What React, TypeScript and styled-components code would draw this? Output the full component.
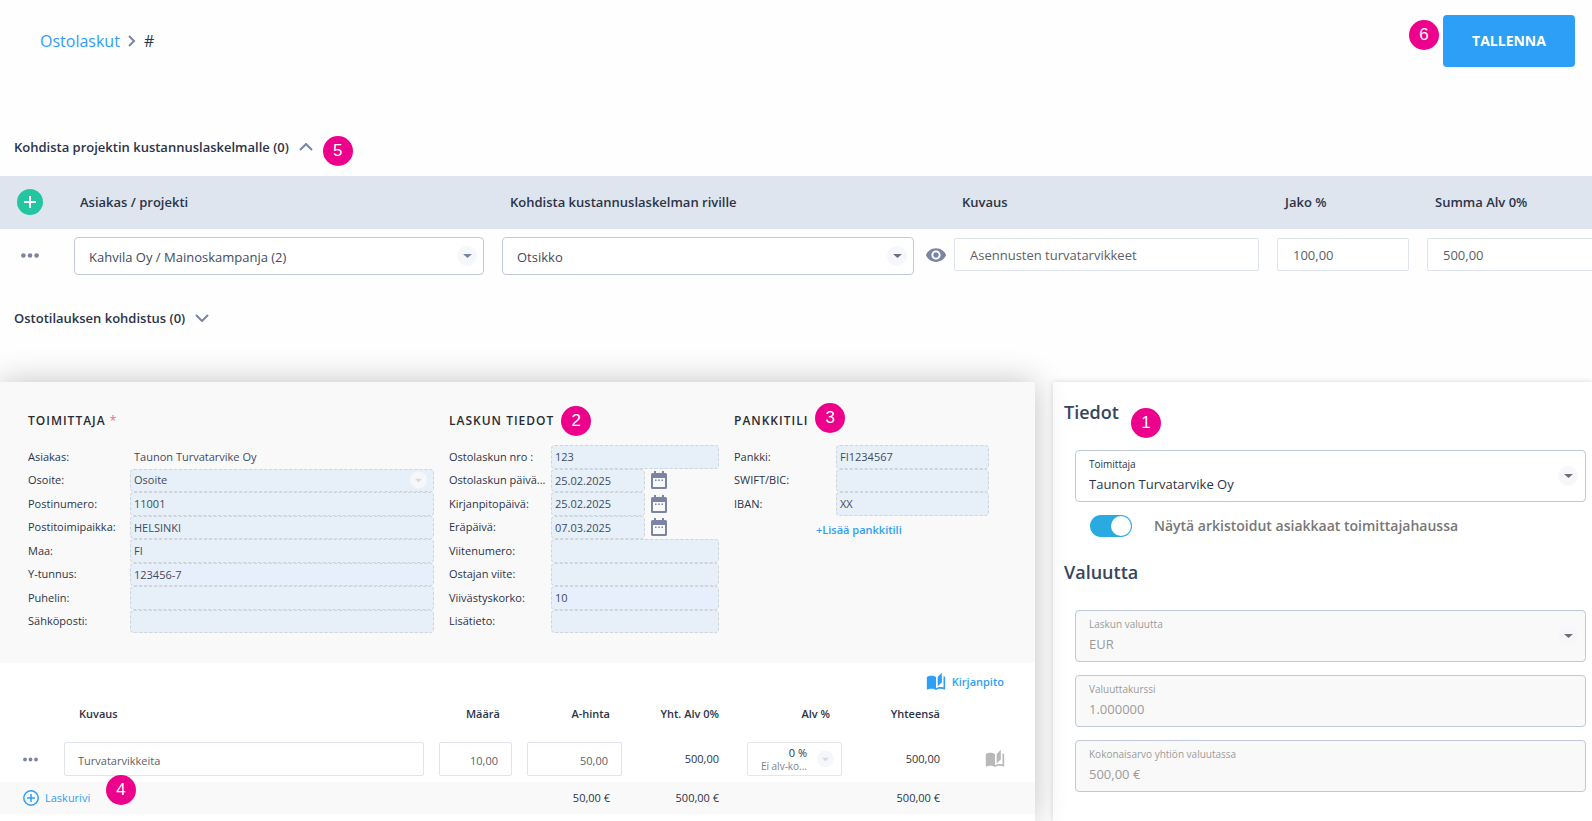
import React from 'react';
import styled, { createGlobalStyle, css } from 'styled-components';
import { MdAutoStories, MdVisibility } from 'react-icons/md';

const GlobalStyle = createGlobalStyle`
  *, *::before, *::after { box-sizing: border-box; }
  body {
    margin: 0;
    background: #fefefe;
    color: #2b3448;
    font-family: 'Open Sans', 'Noto Sans', sans-serif;
    font-size: 13px;
    line-height: 20px;
  }
  input, select, button { font: inherit; color: inherit; margin: 0; }
  h1, h2, h3 { margin: 0; }
`;

const Page = styled.main`
  display: flex;
  flex-direction: column;
  min-height: 100vh;
  overflow-x: clip;
`;

/* ---------- shared parts ---------- */

const Anchor = styled.div`
  position: relative;
  display: inline-flex;
  align-items: center;
`;

const Badge = styled.span<{ $top: number; $gap: number; $before?: boolean }>`
  position: absolute;
  z-index: 3;
  top: ${(p) => p.$top}px;
  ${(p) => (p.$before ? 'right' : 'left')}: 100%;
  margin: 0 ${(p) => p.$gap}px;
  width: 30px;
  height: 30px;
  border-radius: 50%;
  background: #ec008c;
  color: #fff;
  font: 400 17px/29px 'Liberation Sans', Arial, sans-serif;
  letter-spacing: 0;
  text-align: center;
`;

const CaretBubble = styled.span<{ $size: number; $right: number; $tone?: string }>`
  position: absolute;
  top: 50%;
  right: ${(p) => p.$right}px;
  width: ${(p) => p.$size}px;
  height: ${(p) => p.$size}px;
  transform: translateY(-50%);
  display: grid;
  place-items: center;
  border-radius: 50%;
  background: #f6f7fb;
  color: ${(p) => p.$tone ?? '#6b7080'};
  pointer-events: none;
`;

function Caret(props: { size?: number; right?: number; tone?: string; width?: number }) {
  const { size = 20, right = 7, tone, width = 9 } = props;
  return (
    <CaretBubble $size={size} $right={right} $tone={tone}>
      <svg width={width} height="4" viewBox="0 0 10 5" preserveAspectRatio="none" aria-hidden="true">
        <path d="M0 0h10L5 5z" fill="currentColor" />
      </svg>
    </CaretBubble>
  );
}

function Chevron({ dir }: { dir: 'right' | 'up' | 'down' }) {
  const shapes = {
    right: { w: 8, h: 12, d: 'M1 1l5 5-5 5' },
    up: { w: 14, h: 8, d: 'M1 7l6-6 6 6' },
    down: { w: 14, h: 8, d: 'M1 1l6 6 6-6' },
  };
  const s = shapes[dir];
  return (
    <svg width={s.w} height={s.h} viewBox={`0 0 ${s.w} ${s.h}`} aria-hidden="true">
      <path d={s.d} fill="none" stroke="#7c84a3" strokeWidth="2" />
    </svg>
  );
}

const IconButton = styled.button`
  display: inline-flex;
  align-items: center;
  justify-content: center;
  padding: 0;
  border: 0;
  background: none;
  color: #7c84a3;
  cursor: pointer;
`;

function Dots({ width }: { width: number }) {
  return (
    <svg width={width} height="5" viewBox="0 0 18 5" aria-hidden="true">
      <circle cx="2.4" cy="2.5" r="2.3" fill="currentColor" />
      <circle cx="9" cy="2.5" r="2.3" fill="currentColor" />
      <circle cx="15.6" cy="2.5" r="2.3" fill="currentColor" />
    </svg>
  );
}

/* ---------- top bar ---------- */

const TopBar = styled.header`
  display: flex;
  align-items: center;
  justify-content: space-between;
  padding: 15px 17px 0 40px;
`;

const Breadcrumb = styled.nav`
  display: flex;
  align-items: center;
  gap: 8px;
  font-size: 16px;
  font-weight: 500;
  a { color: #2e9ff7; text-decoration: none; }
`;

const SaveButton = styled.button`
  width: 132px;
  height: 52px;
  border: 0;
  border-radius: 4px;
  background: #2e9ff7;
  color: #fff;
  font-size: 14px;
  font-weight: 700;
  cursor: pointer;
`;

/* ---------- allocation ---------- */

const SectionToggle = styled.button`
  display: inline-flex;
  align-items: center;
  gap: 10px;
  height: 22px;
  padding: 0;
  border: 0;
  background: none;
  font-weight: 600;
  cursor: pointer;
`;

const Section = styled.section<{ $above: number; $below: number }>`
  display: flex;
  margin: ${(p) => p.$above}px 0 ${(p) => p.$below}px;
  padding-left: 14px;
`;

const AllocationTable = styled.table`
  display: block;
  width: calc(100% + 16px);
  thead, tbody { display: block; }
  tr {
    display: grid;
    grid-template-columns: 74px minmax(0, 428fr) minmax(0, 452fr) minmax(0, 323fr) minmax(0, 150fr) minmax(0, 181fr);
  }
  thead tr { align-items: center; height: 53px; padding-bottom: 2px; background: #dee5ef; }
  th { padding: 0 0 0 8px; text-align: left; font-weight: 600; }
  th:nth-child(2) { padding-left: 6px; }
  th:first-child { display: flex; padding-left: 17px; }
  td { padding: 9px 18px 8px 0; }
  td:first-child { padding: 14px 0 0 21px; }
  td:last-child { padding-right: 0; }
`;

const SelectCell = styled.td`
  && { display: flex; align-items: start; gap: 11px; padding: 8px 18px 8px 0; }
  &&:nth-child(3) { padding-right: 7px; }
  ${IconButton} { height: 36px; }
`;

const AddButton = styled(IconButton)`
  width: 26px;
  height: 26px;
  border-radius: 50%;
  background: #23c6a1;
  color: #fff;
`;

const SelectBox = styled.div`
  position: relative;
  flex: 1;
  min-width: 0;
  select {
    appearance: none;
    width: 100%;
    height: 38px;
    padding: 2px 32px 0 14px;
    border: 1px solid #c1c8da;
    border-radius: 4px;
    background: #fff;
    color: #414b5e;
  }
`;

const PlainInput = styled.input<{ $small?: boolean }>`
  display: block;
  width: 100%;
  border: 1px solid #e0e4ec;
  border-radius: 2px;
  background: #fff;
  color: #5b5f68;
  ${(p) =>
    p.$small
      ? css`
          height: 34px;
          padding: 2px 13px 0;
          font-size: 11px;
        `
      : css`
          height: 33px;
          padding: 0 15px;
        `}
`;

/* ---------- panels ---------- */

const Panels = styled.div`
  display: grid;
  grid-template-columns: minmax(0, 1035fr) minmax(0, 539fr);
  gap: 18px;
  flex: 1;
`;

const InvoicePanel = styled.section`
  position: relative;
  z-index: 1;
  background: #fff;
  box-shadow: 0 0 30px rgba(0, 0, 0, 0.24);
  font-size: 11px;
`;

const SidePanel = styled.aside`
  padding: 18px 6px 0 11px;
  background: #fff;
  box-shadow: 0 0 6px rgba(0, 0, 0, 0.16);
`;

const DetailGrid = styled.div`
  display: grid;
  grid-template-columns: minmax(0, 406fr) minmax(0, 270fr) minmax(0, 255fr);
  gap: 15px;
  padding: 29px 46px 30px 28px;
  background: #f9f9f9;
`;

const DetailTitle = styled.h2`
  font-size: 12px;
  line-height: 20px;
  font-weight: 600;
  letter-spacing: 1px;
  color: #2a2a33;
  i { color: #ec6a92; font-style: normal; font-weight: 400; }
`;

const FieldList = styled.div`
  display: grid;
  grid-template-rows: repeat(8, 1fr);
  height: 188px;
  margin-top: 14px;
`;

const FieldRow = styled.div`
  display: grid;
  grid-template-columns: 102px minmax(0, 1fr);
  align-items: stretch;
  label { align-self: center; white-space: nowrap; }
`;

const FieldSlot = styled.div`
  position: relative;
  display: flex;
  align-items: stretch;
  gap: 6px;
  min-width: 0;
`;

const dashed = css`
  flex: 1;
  min-width: 0;
  height: 100%;
  padding: 0 3px;
  border: 1px dashed #cfd4d8;
  border-radius: 4px;
  color: #414b5e;
`;

const FieldInput = styled.input<{ $kind?: string }>`
  ${dashed}
  background: ${(p) => (p.$kind === 'autofill' ? '#e8effc' : '#e7f0f8')};
  ${(p) => p.$kind === 'bare' && css`background: none; border-color: transparent;`}
  ${(p) => p.$kind === 'date' && css`flex: 0 0 94px;`}
`;

const FieldSelect = styled.select`
  ${dashed}
  appearance: none;
  background: #e7f0f8;
`;

const AddAccount = styled.a`
  justify-self: start;
  align-self: end;
  margin-left: 82px;
  color: #2e9ff7;
  font-weight: 600;
  line-height: 18px;
  text-decoration: none;
`;

function CalendarIcon() {
  return (
    <svg width="16" height="18" viewBox="0 0 16 18" aria-hidden="true">
      <path
        fillRule="evenodd"
        fill="currentColor"
        d="M3 0h2v2h6V0h2v2h1.500a1.500 1.500 0 0 1 1.500 1.500v13a1.500 1.500 0 0 1-1.500 1.500h-13A1.500 1.500 0 0 1 0 16.500v-13A1.500 1.500 0 0 1 1.500 2H3zM2 7v9h12V7z"
      />
      <path fill="currentColor" d="M4 8.500h1.600v1.600H4zM7.200 8.500h1.600v1.600H7.200zM10.400 8.500H12v1.600h-1.600z" />
    </svg>
  );
}

type Field = { id: string; label: string; value?: string; kind?: 'bare' | 'autofill' | 'date' | 'select' };

function Fields({ items, children }: { items: Field[]; children?: React.ReactNode }) {
  return (
    <FieldList>
      {items.map((f) => (
        <FieldRow key={f.id}>
          <label htmlFor={f.id}>{f.label}</label>
          <FieldSlot>
            {f.kind === 'select' ? (
              <>
                <FieldSelect id={f.id} defaultValue={f.value}>
                  <option>{f.value}</option>
                </FieldSelect>
                <Caret size={17} right={7} tone="#d5d8e0" width={7} />
              </>
            ) : (
              <FieldInput id={f.id} $kind={f.kind} defaultValue={f.value} />
            )}
            {f.kind === 'date' && (
              <IconButton type="button" aria-label={`Valitse: ${f.label}`}>
                <CalendarIcon />
              </IconButton>
            )}
          </FieldSlot>
        </FieldRow>
      ))}
      {children}
    </FieldList>
  );
}

const supplier: Field[] = [
  { id: 'asiakas', label: 'Asiakas:', value: 'Taunon Turvatarvike Oy', kind: 'bare' },
  { id: 'osoite', label: 'Osoite:', value: 'Osoite', kind: 'select' },
  { id: 'postinumero', label: 'Postinumero:', value: '11001' },
  { id: 'postitoimipaikka', label: 'Postitoimipaikka:', value: 'HELSINKI' },
  { id: 'maa', label: 'Maa:', value: 'FI' },
  { id: 'ytunnus', label: 'Y-tunnus:', value: '123456-7', kind: 'autofill' },
  { id: 'puhelin', label: 'Puhelin:' },
  { id: 'sahkoposti', label: 'Sähköposti:' },
];

const invoice: Field[] = [
  { id: 'nro', label: 'Ostolaskun nro :', value: '123' },
  { id: 'paiva', label: 'Ostolaskun päivä...', value: '25.02.2025', kind: 'date' },
  { id: 'kirjanpitopaiva', label: 'Kirjanpitopäivä:', value: '25.02.2025', kind: 'date' },
  { id: 'erapaiva', label: 'Eräpäivä:', value: '07.03.2025', kind: 'date' },
  { id: 'viitenumero', label: 'Viitenumero:' },
  { id: 'ostajanviite', label: 'Ostajan viite:' },
  { id: 'viivastyskorko', label: 'Viivästyskorko:', value: '10', kind: 'autofill' },
  { id: 'lisatieto', label: 'Lisätieto:' },
];

const bank: Field[] = [
  { id: 'pankki', label: 'Pankki:', value: 'FI1234567' },
  { id: 'swift', label: 'SWIFT/BIC:' },
  { id: 'iban', label: 'IBAN:', value: 'XX' },
];

/* ---------- invoice lines ---------- */

const LinesBar = styled.div`
  display: flex;
  align-items: center;
  justify-content: flex-end;
  height: 38px;
  padding-right: 31px;
`;

const TextButton = styled(IconButton)<{ $weight?: number }>`
  gap: 6px;
  color: #2e9ff7;
  font-weight: ${(p) => p.$weight ?? 400};
  white-space: nowrap;
`;

const LinesTable = styled.table`
  display: block;
  thead, tbody, tfoot { display: block; }
  tr {
    display: grid;
    grid-template-columns: 64px minmax(0, 375fr) minmax(0, 88fr) minmax(0, 95fr) minmax(0, 125fr) minmax(0, 95fr) minmax(0, 143fr) 50px;
    align-items: center;
  }
  thead tr { height: 26px; }
  tbody tr { padding: 15px 0 6px; }
  tfoot tr { height: 32px; background: #f9f9f9; }
  th { padding: 0; font-weight: 600; text-align: right; white-space: nowrap; }
  td { padding: 0; text-align: right; }
  th:nth-child(2) { padding-left: 15px; text-align: left; }
  th:nth-child(3) { padding-right: 27px; }
  th:nth-child(4), th:nth-child(6), tfoot td:nth-child(4) { padding-right: 12px; }
  th:nth-child(5), td:nth-child(5) { padding-right: 28px; }
  th:nth-child(7), td:nth-child(7) { padding-right: 45px; }
  td:nth-child(1) { padding-left: 23px; text-align: left; }
  tbody td:nth-child(2), tbody td:nth-child(3) { padding-right: 15px; }
  td:nth-child(3) input, td:nth-child(4) input { text-align: right; }
  td > button, td > ${Anchor} { display: flex; }
`;

const VatBox = styled.div`
  position: relative;
  display: flex;
  flex-direction: column;
  align-items: flex-start;
  height: 34px;
  padding: 3px 0 0 10px;
  border: 1px solid #e4e6ec;
  border-radius: 2px;
  background: #fff;
  select {
    appearance: none;
    width: 49px;
    height: 14px;
    padding: 0;
    border: 0;
    background: none;
    text-align-last: right;
    line-height: 14px;
  }
  small {
    width: 49px;
    color: #7c7f88;
    font-size: 10px;
    line-height: 12px;
    text-align: right;
    white-space: nowrap;
  }
`;

/* ---------- side panel ---------- */

const SideTitle = styled.h2`
  font-size: 18px;
  line-height: 24px;
  font-weight: 600;
  color: #36455c;
`;

const SideStack = styled.div`
  display: flex;
  flex-direction: column;
  gap: 13px;
  margin: 26px 0 23px 11px;
`;

const FloatField = styled.div<{ $muted?: boolean }>`
  position: relative;
  display: flex;
  flex-direction: column;
  height: 52px;
  padding: 5px 13px 0;
  border: 1px solid #c1c8da;
  border-radius: 4px;
  background: ${(p) => (p.$muted ? '#f9f9f9' : '#fff')};
  color: ${(p) => (p.$muted ? '#9b9b9b' : '#2b3448')};
  label { font-size: 10px; line-height: 16px; }
  input, select {
    appearance: none;
    width: 100%;
    height: 24px;
    padding: 0;
    border: 0;
    background: none;
    opacity: 1;
    color: inherit;
  }
`;

const Switch = styled.label`
  display: flex;
  align-items: center;
  gap: 22px;
  height: 22px;
  padding-left: 15px;
  color: #777;
  font-size: 14px;
  font-weight: 600;
  input {
    appearance: none;
    position: relative;
    width: 42px;
    height: 22px;
    border-radius: 11px;
    background: #29abe2;
  }
  input::before {
    content: '';
    position: absolute;
    top: 1px;
    right: 1px;
    width: 20px;
    height: 20px;
    border-radius: 50%;
    background: #fff;
  }
`;

export default function App() {
  return (
    <Page>
      <GlobalStyle />
      <TopBar>
        <Breadcrumb aria-label="Murupolku">
          <a href="#ostolaskut">Ostolaskut</a>
          <Chevron dir="right" />
          <span>#</span>
        </Breadcrumb>
        <Anchor>
          <Badge $top={5} $gap={4} $before>6</Badge>
          <SaveButton type="button">TALLENNA</SaveButton>
        </Anchor>
      </TopBar>

      <Section $above={69} $below={18}>
        <Anchor>
          <SectionToggle type="button" aria-expanded="true">
            Kohdista projektin kustannuslaskelmalle (0)
            <Chevron dir="up" />
          </SectionToggle>
          <Badge $top={0} $gap={10}>5</Badge>
        </Anchor>
      </Section>

      <AllocationTable>
        <thead>
          <tr>
            <th>
              <AddButton type="button" aria-label="Lisää rivi">
                <svg width="12" height="12" viewBox="0 0 12 12" aria-hidden="true">
                  <path d="M6 0v12M0 6h12" stroke="currentColor" strokeWidth="2" />
                </svg>
              </AddButton>
            </th>
            <th>Asiakas / projekti</th>
            <th>Kohdista kustannuslaskelman riville</th>
            <th>Kuvaus</th>
            <th>Jako %</th>
            <th>Summa Alv 0%</th>
          </tr>
        </thead>
        <tbody>
          <tr>
            <td>
              <IconButton type="button" aria-label="Rivin toiminnot">
                <Dots width={18} />
              </IconButton>
            </td>
            <SelectCell>
              <SelectBox>
                <select aria-label="Asiakas / projekti">
                  <option>Kahvila Oy / Mainoskampanja (2)</option>
                </select>
                <Caret tone="#7c84a3" />
              </SelectBox>
            </SelectCell>
            <SelectCell>
              <SelectBox>
                <select aria-label="Kustannuslaskelman rivi">
                  <option>Otsikko</option>
                </select>
                <Caret />
              </SelectBox>
              <IconButton type="button" aria-label="Näytä">
                <MdVisibility size={22} />
              </IconButton>
            </SelectCell>
            <td><PlainInput aria-label="Kuvaus" defaultValue="Asennusten turvatarvikkeet" /></td>
            <td><PlainInput aria-label="Jako %" defaultValue="100,00" /></td>
            <td><PlainInput aria-label="Summa Alv 0%" defaultValue="500,00" /></td>
          </tr>
        </tbody>
      </AllocationTable>

      <Section $above={24} $below={53}>
        <SectionToggle type="button" aria-expanded="false">
          Ostotilauksen kohdistus (0)
          <Chevron dir="down" />
        </SectionToggle>
      </Section>

      <Panels>
        <InvoicePanel>
          <DetailGrid>
            <div>
              <DetailTitle>TOIMITTAJA <i>*</i></DetailTitle>
              <Fields items={supplier} />
            </div>
            <div>
              <Anchor>
                <DetailTitle>LASKUN TIEDOT</DetailTitle>
                <Badge $top={-5} $gap={7}>2</Badge>
              </Anchor>
              <Fields items={invoice} />
            </div>
            <div>
              <Anchor>
                <DetailTitle>PANKKITILI</DetailTitle>
                <Badge $top={-8} $gap={7}>3</Badge>
              </Anchor>
              <Fields items={bank}>
                <AddAccount href="#lisaa-pankkitili">+Lisää pankkitili</AddAccount>
              </Fields>
            </div>
          </DetailGrid>

          <LinesBar>
            <TextButton type="button" $weight={600}>
              <MdAutoStories size={20} />
              Kirjanpito
            </TextButton>
          </LinesBar>

          <LinesTable>
            <thead>
              <tr>
                <th />
                <th>Kuvaus</th>
                <th>Määrä</th>
                <th>A-hinta</th>
                <th>Yht. Alv 0%</th>
                <th>Alv %</th>
                <th>Yhteensä</th>
                <th />
              </tr>
            </thead>
            <tbody>
              <tr>
                <td>
                  <IconButton type="button" aria-label="Laskurivin toiminnot">
                    <Dots width={15} />
                  </IconButton>
                </td>
                <td><PlainInput $small aria-label="Kuvaus" defaultValue="Turvatarvikkeita" /></td>
                <td><PlainInput $small aria-label="Määrä" defaultValue="10,00" /></td>
                <td><PlainInput $small aria-label="A-hinta" defaultValue="50,00" /></td>
                <td>500,00</td>
                <td>
                  <VatBox>
                    <select aria-label="Alv %">
                      <option>0 %</option>
                    </select>
                    <small>Ei alv-ko...</small>
                    <Caret size={17} right={7} tone="#d5d8e0" width={7} />
                  </VatBox>
                </td>
                <td>500,00</td>
                <td>
                  <IconButton type="button" aria-label="Rivin kirjanpito">
                    <MdAutoStories size={20} color="#b9b9b9" />
                  </IconButton>
                </td>
              </tr>
            </tbody>
            <tfoot>
              <tr>
                <td>
                  <Anchor>
                    <TextButton type="button">
                      <svg width="16" height="16" viewBox="0 0 16 16" fill="none" stroke="currentColor" strokeWidth="1.500" aria-hidden="true">
                        <circle cx="8" cy="8" r="7.200" />
                        <path d="M8 4v8M4 8h8" />
                      </svg>
                      Laskurivi
                    </TextButton>
                    <Badge $top={-13} $gap={42}>4</Badge>
                  </Anchor>
                </td>
                <td />
                <td />
                <td>50,00 €</td>
                <td>500,00 €</td>
                <td />
                <td>500,00 €</td>
                <td />
              </tr>
            </tfoot>
          </LinesTable>
        </InvoicePanel>

        <SidePanel>
          <Anchor>
            <SideTitle>Tiedot</SideTitle>
            <Badge $top={8} $gap={12}>1</Badge>
          </Anchor>
          <SideStack>
            <FloatField>
              <label htmlFor="toimittaja">Toimittaja</label>
              <select id="toimittaja">
                <option>Taunon Turvatarvike Oy</option>
              </select>
              <Caret tone="#6f6f6f" />
            </FloatField>
            <Switch>
              <input type="checkbox" role="switch" defaultChecked />
              Näytä arkistoidut asiakkaat toimittajahaussa
            </Switch>
          </SideStack>
          <SideTitle>Valuutta</SideTitle>
          <SideStack>
            <FloatField $muted>
              <label htmlFor="valuutta">Laskun valuutta</label>
              <select id="valuutta" disabled>
                <option>EUR</option>
              </select>
              <Caret tone="#6f6f6f" />
            </FloatField>
            <FloatField $muted>
              <label htmlFor="kurssi">Valuuttakurssi</label>
              <input id="kurssi" disabled defaultValue="1.000000" />
            </FloatField>
            <FloatField $muted>
              <label htmlFor="kokonaisarvo">Kokonaisarvo yhtiön valuutassa</label>
              <input id="kokonaisarvo" disabled defaultValue="500,00 €" />
            </FloatField>
          </SideStack>
        </SidePanel>
      </Panels>
    </Page>
  );
}
